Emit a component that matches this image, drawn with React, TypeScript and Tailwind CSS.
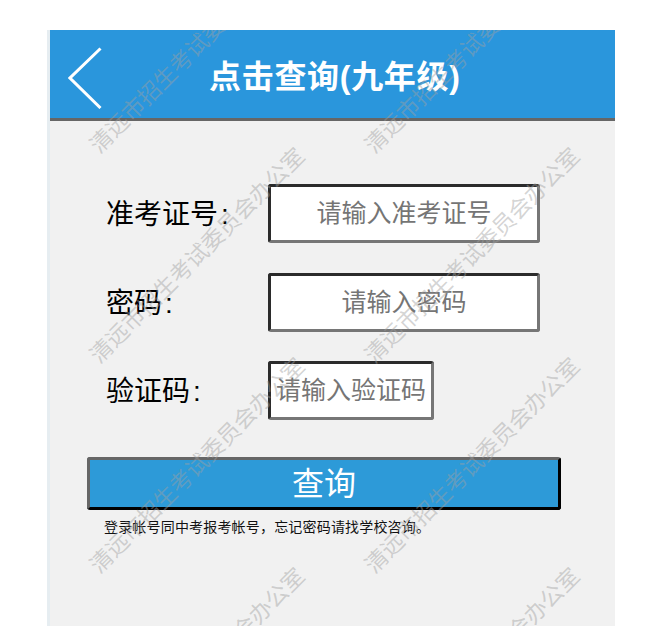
import React from "react";

const marks: { x: number; y: number }[] = [];
for (const x of [86, 361]) {
  for (const y of [141, 351, 561, 771]) {
    marks.push({ x: x - 50, y: y - 30 });
  }
}

function Row({ label, placeholder, w, className }: { label: string; placeholder: string; w: string; className: string }) {
  return (
    <div className={`flex items-center ${className}`}>
      <label className="w-[162px] pt-[3px] text-[28px] leading-[40px] text-black">
        {label}
        <span className="ml-[3px]">:</span>
      </label>
      <input
        readOnly
        placeholder={placeholder}
        className={`${w} h-[59px] bg-white text-center text-[25px] outline-none placeholder:text-[#757575] border-[3px] border-t-[#2b2b2b] border-l-[#2b2b2b] border-r-[#767676] border-b-[#767676] rounded-[3px] px-0`}
      />
    </div>
  );
}

export default function App() {
  return (
    <div
      className="min-h-[626px] bg-white pl-[47px] pt-[30px] overflow-hidden"
      style={{ fontFamily: '"Liberation Sans", "Noto Sans CJK SC", sans-serif' }}
    >
      <div className="w-[568px] h-[596px] border-l-[3px] border-[#e6edf1]">
        <div className="relative w-[565px] h-[596px] bg-[#f1f1f1] overflow-hidden">
          <header className="h-[91px] bg-[#2a96dc] border-b-[3px] border-[#666666] flex items-center pl-[18px]">
            <svg width="34" height="62" viewBox="0 0 34 62" fill="none" className="shrink-0 mt-[8px]">
              <path d="M32.5 1.5 2 31l30.5 30" stroke="#ffffff" strokeWidth="3" />
            </svg>
            <h1 className="ml-[107px] mt-[6px] text-[32px] leading-[40px] font-bold tracking-[0.7px] text-white whitespace-nowrap">
              点击查询(九年级)
            </h1>
          </header>

          <main className="pl-[56px]">
            <Row label="准考证号" placeholder="请输入准考证号" w="w-[272px]" className="mt-[63px]" />
            <Row label="密码" placeholder="请输入密码" w="w-[272px]" className="mt-[30px]" />
            <Row label="验证码" placeholder="请输入验证码" w="w-[166px]" className="mt-[29px]" />
            <button className="block -ml-[19px] mt-[37px] w-[474px] h-[53px] bg-[#2d9ad8] text-white text-[32px] leading-[40px] border-[3px] border-t-[#666666] border-l-[#666666] border-r-black border-b-black rounded-[3px]">
              查询
            </button>
            <p className="mt-[8px] -ml-[2px] text-[14px] leading-[18px] tracking-[0.18px] text-[#111111]">
              登录帐号同中考报考帐号，忘记密码请找学校咨询。
            </p>
          </main>

          <div className="absolute inset-0 pointer-events-none">
            {marks.map((m, i) => (
              <span
                key={i}
                className="absolute whitespace-nowrap text-[22.5px] leading-[23px] text-[#a0a0a0]/45 origin-top-left -rotate-45"
                style={{ left: m.x, top: m.y }}
              >
                清远市招生考试委员会办公室
              </span>
            ))}
          </div>
        </div>
      </div>
    </div>
  );
}
